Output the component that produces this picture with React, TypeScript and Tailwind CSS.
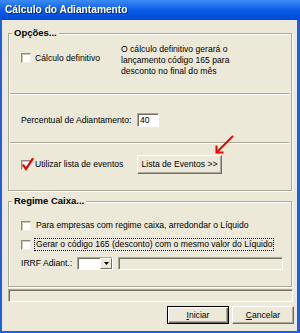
import React from 'react';

const sunken =
  'border border-t-[#ACA899] border-l-[#ACA899] border-b-white border-r-white shadow-[inset_1px_1px_0_#716F64]';

// Caixa de seleção estilo Windows
function CheckBox({ checked = false }: { checked?: boolean }) {
  return (
    <span className="relative block w-[10px] h-[10px] shrink-0 bg-white border border-t-[#8E8B7E] border-l-[#8E8B7E] border-b-[#F1EFE2] border-r-[#F1EFE2] shadow-[inset_1px_1px_0_#C9C6B6]">
      {checked && (
        <svg className="absolute left-[0px] top-[-3px] w-[12px] h-[13px]" viewBox="0 0 12 13">
          <path d="M1.5 7.5 L4 11 L10.5 1" fill="none" stroke="#F00000" strokeWidth="2.2" strokeLinecap="square" />
        </svg>
      )}
    </span>
  );
}

function GroupBox({
  title,
  className = '',
  children
}: {
  title: string;
  className?: string;
  children: React.ReactNode;
}) {
  return (
    <fieldset
      className={`ml-[6px] mr-[5px] p-0 border border-[#ACA899] shadow-[1px_1px_0_#fff,inset_1px_1px_0_#fff] ${className}`}
    >
      <legend className="ml-[3px] px-[2px] bg-[#ECE9D8] font-bold text-[9.5px] leading-[12px] text-black">
        {title}
      </legend>
      {children}
    </fieldset>
  );
}

function Separator() {
  return <div className="ml-[1px] mr-[2px] h-[2px] border-t border-t-[#ACA899] border-b border-b-white" />;
}

function ClassicButton({
  children,
  isDefault = false,
  className = ''
}: {
  children: React.ReactNode;
  isDefault?: boolean;
  className?: string;
}) {
  return (
    <button
      className={
        isDefault
          ? `flex items-center justify-center bg-[#ECE9D8] border border-black shadow-[inset_1px_1px_0_#fff,inset_-1px_-1px_0_#716F64,inset_-2px_-2px_0_#ACA899] ${className}`
          : `flex items-center justify-center bg-[#ECE9D8] border border-t-white border-l-white border-b-[#716F64] border-r-[#716F64] shadow-[inset_-1px_-1px_0_#ACA899] ${className}`
      }
    >
      {children}
    </button>
  );
}

export default function App() {
  return (
    <div className="w-[300px] h-[333px] flex flex-col bg-[#1A5FE4] font-['Liberation_Sans',Arial,sans-serif] text-[8.6px] leading-[11px] text-black">
      {/* Barra de título */}
      <div className="h-[20px] shrink-0 flex items-center pl-[5px] bg-gradient-to-b from-[#3C8CF6] via-[#0A5CE8] to-[#0049D2]">
        <span className="text-white font-bold text-[10.2px] leading-[12px] drop-shadow-[1px_1px_0_#0A2F8A]">
          Cálculo do Adiantamento
        </span>
      </div>

      <div className="flex-1 flex flex-col ml-[2px] mr-[3px] mb-[2px] bg-[#ECE9D8]">
        {/* Opções */}
        <GroupBox title="Opções..." className="mt-[7px]">
          <div className="mt-[5px] flex">
            <div className="w-[112px] pl-[12px] pt-[9px]">
              <div className="flex items-center gap-[4px] h-[10px]">
                <CheckBox />
                <span>Cálculo definitivo</span>
              </div>
            </div>
            <div className="leading-[11px]">
              O cálculo definitivo gerará o<br />
              lançamento código 165 para<br />
              desconto no final do mês
            </div>
          </div>

          <div className="mt-[16px]">
            <Separator />
          </div>

          <div className="mt-[18px] h-[14px] flex items-center pl-[12px]">
            <span className="w-[116px]">Percentual de Adiantamento:</span>
            <div className={`w-[22px] h-[14px] bg-white flex items-center pl-[2px] ${sunken}`}>40</div>
          </div>

          <div className="mt-[15px]">
            <Separator />
          </div>

          <div className="mt-[11px] mb-[16px] h-[19px] flex items-center pl-[12px]">
            <div className="w-[116px] flex items-center gap-[4px]">
              <CheckBox checked />
              <span>Utilizar lista de eventos</span>
            </div>
            <div className="relative">
              <ClassicButton className="w-[85px] h-[19px]">Lista de Eventos &gt;&gt;</ClassicButton>
              <svg className="absolute left-[75px] top-[-21px] w-[24px] h-[22px]" viewBox="212 134 24 22">
                <path d="M233 136 L217 152" stroke="#F00000" strokeWidth="2" fill="none" />
                <path d="M216.5 145.5 L216.5 152.5 L223.5 152.5" stroke="#F00000" strokeWidth="2" fill="none" />
              </svg>
            </div>
          </div>
        </GroupBox>

        {/* Regime Caixa */}
        <GroupBox title="Regime Caixa..." className="mt-[4px]">
          <div className="mt-[12px] h-[13px] flex items-center pl-[12px] gap-[3px]">
            <CheckBox />
            <span className="px-[1px] border border-transparent leading-[11px]">
              Para empresas com regime caixa, arredondar o Líquido
            </span>
          </div>
          <div className="mt-[6px] h-[13px] flex items-center pl-[12px] gap-[3px]">
            <CheckBox />
            <span className="px-[1px] border border-dotted border-black leading-[11px]">
              Gerar o código 165 (desconto) com o mesmo valor do Líquido
            </span>
          </div>
          <div className="mt-[6px] mb-[16px] h-[13px] flex items-center pl-[12px]">
            <span className="w-[56px]">IRRF Adiant.:</span>
            <div className={`w-[36px] h-[13px] bg-white flex justify-end items-stretch ${sunken}`}>
              <div className="w-[12px] bg-[#ECE9D8] border border-t-white border-l-white border-b-[#716F64] border-r-[#716F64] flex items-center justify-center">
                <svg className="w-[5px] h-[3px]" viewBox="0 0 5 3">
                  <path d="M0 0 H5 L2.5 3 Z" fill="#000" />
                </svg>
              </div>
            </div>
            <div className={`ml-[5px] w-[165px] h-[13px] bg-[#ECE9D8] ${sunken}`} />
          </div>
        </GroupBox>

        {/* Barra de status */}
        <div className={`mt-[2px] ml-[6px] mr-[4px] h-[13px] ${sunken}`} />

        {/* Botões */}
        <div className="mt-[4px] flex justify-end gap-[3px] pr-[3px]">
          <ClassicButton isDefault className="w-[62px] h-[18px]">
            <span>
              <span className="underline">I</span>niciar
            </span>
          </ClassicButton>
          <ClassicButton className="w-[62px] h-[18px]">
            <span>
              <span className="underline">C</span>ancelar
            </span>
          </ClassicButton>
        </div>
      </div>
    </div>
  );
}
